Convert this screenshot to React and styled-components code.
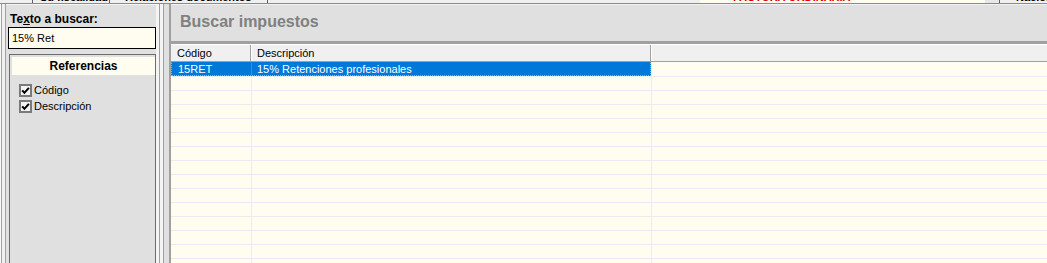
import React from "react"
import styled, { createGlobalStyle } from "styled-components"

const GlobalStyle = createGlobalStyle`
  html, body {
    margin: 0;
    padding: 0;
    background: #e0e0e0;
  }
  body {
    font-family: "Liberation Sans", Arial, sans-serif;
    font-size: 11px;
    color: #000;
  }
`

const Window = styled.div`
  width: 1047px;
  height: 263px;
  overflow: hidden;
  display: flex;
  flex-direction: column;
  background: #e0e0e0;
`

const TopStrip = styled.div`
  height: 3px;
  flex: none;
  display: flex;
  align-items: flex-end;
  overflow: hidden;
  background: #f0f0f0;
  border-bottom: 1px solid #8a8a8a;
`

const StripCell = styled.div`
  flex: none;
  width: ${p => p.$w}px;
  height: 11px;
  line-height: 11px;
  padding-left: ${p => p.$pad || 0}px;
  box-sizing: border-box;
  font-weight: bold;
  white-space: nowrap;
  color: ${p => p.$color || "#000"};
  background: ${p => p.$bg || "transparent"};
  border-right: ${p => (p.$sep ? "1px solid #606060" : "none")};
`

const Main = styled.div`
  flex: 1;
  display: flex;
  min-height: 0;
`

const Edge = styled.div`
  flex: none;
  width: 6px;
  background: linear-gradient(
    to right,
    #fafafa 0 1px,
    #a0a0a0 1px 2px,
    #f0f0f0 2px 5px,
    #a0a0a0 5px 6px
  );
`

const LeftPanel = styled.div`
  flex: none;
  width: 150px;
  display: flex;
  flex-direction: column;
  padding-left: 2px;
  box-sizing: border-box;
  border-top: 1px solid #f6f6f6;
`

const SearchLabel = styled.label`
  display: block;
  margin: 7px 0 0 2px;
  height: 15px;
  line-height: 14px;
  font-size: 12px;
  font-weight: bold;
`

const Accel = styled.span`
  text-decoration: underline;
`

const SearchInput = styled.div`
  width: 148px;
  height: 22px;
  box-sizing: border-box;
  border: 1px solid #000;
  background: #fffcf0;
  padding: 0 0 0 3px;
  line-height: 20px;
  font-size: 11px;
`

const RefBox = styled.div`
  flex: 1;
  width: 147px;
  margin: 5px 0 0 1px;
  box-sizing: border-box;
  border: 1px solid #6d6d6d;
  border-bottom: none;
  padding: 2px 0 0 2px;
`

const RefHeader = styled.div`
  height: 18px;
  line-height: 18px;
  background: #fffcf0;
  text-align: center;
  font-size: 12px;
  font-weight: bold;
`

const CheckList = styled.div`
  display: flex;
  flex-direction: column;
  gap: 3px;
  padding: 9px 0 0 7px;
`

const CheckRow = styled.label`
  display: flex;
  align-items: center;
  gap: 2px;
  height: 13px;
  line-height: 13px;
`

const CheckIcon = () => (
  <svg width="13" height="13" viewBox="0 0 13 13">
    <rect x="1" y="1" width="11" height="11" fill="#f4f4f4" stroke="#7a7a7a" strokeWidth="2" />
    <path d="M3.2 6.4 L5.4 8.8 L9.9 3.8" fill="none" stroke="#000" strokeWidth="2" />
  </svg>
)

const Splitter = styled.div`
  flex: none;
  width: 15px;
  background: linear-gradient(
    to right,
    #f4f4f4 0 3px,
    #a0a0a0 3px 4px,
    #f4f4f4 4px 7px,
    #a0a0a0 7px 8px,
    #e0e0e0 8px 13px,
    #a0a0a0 13px 15px
  );
`

const RightPanel = styled.div`
  flex: 1;
  display: flex;
  flex-direction: column;
  min-width: 0;
`

const TitleBar = styled.div`
  flex: none;
  height: 40px;
  box-sizing: border-box;
  padding: 8px 0 0 9px;
  border-top: 1px solid #f2f2f2;
  border-bottom: 3px solid #a0a0a0;
  background: #e0e0e0;
  color: #808080;
  font-size: 16px;
  line-height: 18px;
  font-weight: bold;
`

const Grid = styled.div`
  flex: 1;
  display: flex;
  flex-direction: column;
  background: #fffcf0;
  overflow: hidden;
`

const HeaderRow = styled.div`
  flex: none;
  display: flex;
  height: 18px;
  box-sizing: border-box;
  background: #f0f0f0;
  border-top: 1px solid #ffffff;
  border-bottom: 1px solid #a0a0a0;
`

const HeaderCell = styled.div`
  flex: ${p => (p.$w ? "none" : 1)};
  width: ${p => (p.$w ? `${p.$w}px` : "auto")};
  box-sizing: border-box;
  padding-left: ${p => (p.$first ? 6 : 5)}px;
  line-height: 16px;
  border-left: ${p => (p.$first ? "none" : "1px solid #ffffff")};
  border-right: ${p => (p.$last ? "none" : "1px solid #a0a0a0")};
  white-space: nowrap;
`

const Row = styled.div`
  flex: none;
  display: flex;
  height: 14px;
  box-sizing: border-box;
  border-top: 1px solid ${p => (p.$selected ? "#fffcf0" : "#e8ebf0")};
`

const Selection = styled.div`
  flex: none;
  display: flex;
  width: 480px;
  margin-top: -1px;
  height: 14px;
  box-sizing: border-box;
  background: #0078d7;
  color: #fff;
  border: 1px dotted #f0a040;
  border-top: 1px solid #0078d7;
`

const Cell = styled.div`
  flex: ${p => (p.$w ? "none" : 1)};
  width: ${p => (p.$w ? `${p.$w}px` : "auto")};
  box-sizing: border-box;
  padding-left: ${p => p.$pad}px;
  line-height: 12px;
  white-space: nowrap;
  border-left: ${p => (p.$line ? `1px solid ${p.$line}` : "none")};
`

const rows = Array.from({ length: 14 })

export default function App() {
  return (
    <>
      <GlobalStyle />
      <Window>
        <TopStrip>
          <StripCell $w={33} $sep />
          <StripCell $w={77} $pad={7} $sep>Su fiscalidad</StripCell>
          <StripCell $w={158} $pad={15} $sep>Relaciones documentos</StripCell>
          <StripCell $w={432} />
          <StripCell $w={285} $pad={33} $color="#e00000" $bg="#fffcf0">
            FACTURA ORDINARIA
          </StripCell>
          <StripCell $w={15} $bg="#e8e8e8" $sep />
          <StripCell $w={47} $pad={16}>Nación</StripCell>
        </TopStrip>
        <Main>
          <Edge />
          <LeftPanel>
            <SearchLabel>
              Te<Accel>x</Accel>to a buscar:
            </SearchLabel>
            <SearchInput>15% Ret</SearchInput>
            <RefBox>
              <RefHeader>Referencias</RefHeader>
              <CheckList>
                <CheckRow>
                  <CheckIcon />
                  Código
                </CheckRow>
                <CheckRow>
                  <CheckIcon />
                  Descripción
                </CheckRow>
              </CheckList>
            </RefBox>
          </LeftPanel>
          <Splitter />
          <RightPanel>
            <TitleBar>Buscar impuestos</TitleBar>
            <Grid>
              <HeaderRow>
                <HeaderCell $w={80} $first>Código</HeaderCell>
                <HeaderCell $w={400}>Descripción</HeaderCell>
                <HeaderCell $last />
              </HeaderRow>
              <Row $selected>
                <Selection>
                  <Cell $w={79} $pad={6}>15RET</Cell>
                  <Cell $w={399} $pad={5} $line="#3a8ee0">
                    15% Retenciones profesionales
                  </Cell>
                </Selection>
                <Cell $line="#ececec" />
              </Row>
              {rows.map((_, i) => (
                <Row key={i}>
                  <Cell $w={80} />
                  <Cell $w={400} $line="#ececec" />
                  <Cell $line="#ececec" />
                </Row>
              ))}
            </Grid>
          </RightPanel>
        </Main>
      </Window>
    </>
  )
}
